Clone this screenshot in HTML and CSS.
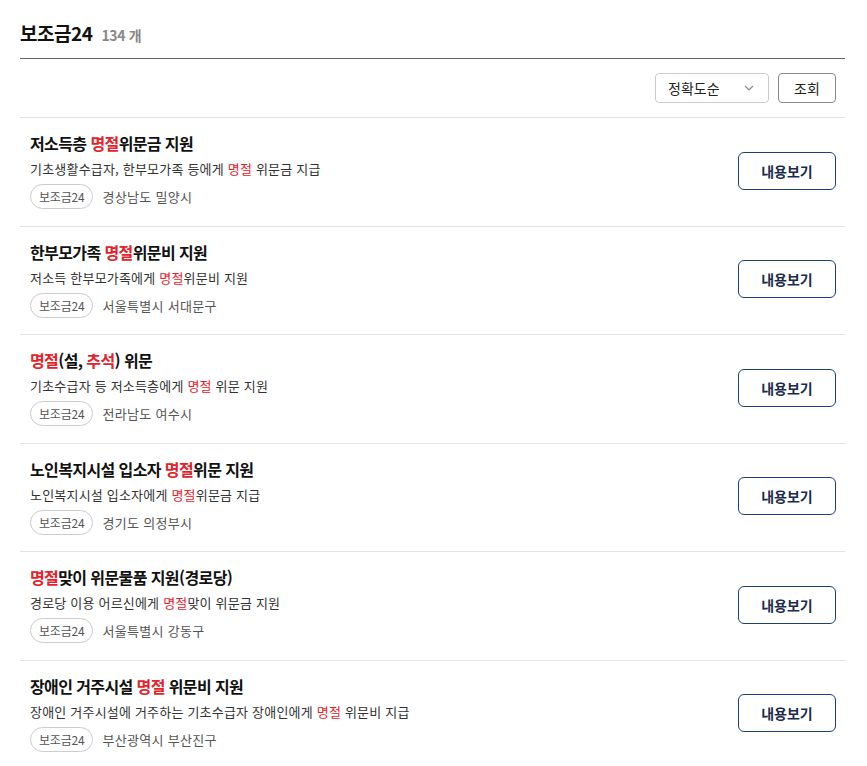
FILE: index.html
```html
<!DOCTYPE html>
<html lang="ko">
<head>
<meta charset="utf-8">
<link rel="stylesheet" href="styles.css">
</head>
<body>
<div class="wrap">
  <div class="head">
    <h2 class="head-title">보조금24</h2>
    <span class="head-count">134 개</span>
  </div>
  <div class="toolbar">
    <div class="select">
      <span>정확도순</span>
      <svg class="chev" width="10" height="6" viewBox="0 0 10 6"><path d="M1 1l4 4 4-4" fill="none" stroke="#888" stroke-width="1.2"/></svg>
    </div>
    <button class="btn-search">조회</button>
  </div>
  <ul class="list">
    <li class="item">
      <div class="info">
        <div class="title">저소득층 <em>명절</em>위문금 지원</div>
        <div class="desc">기초생활수급자, 한부모가족 등에게 <em>명절</em> 위문금 지급</div>
        <div class="meta"><span class="tag">보조금24</span><span class="region">경상남도 밀양시</span></div>
      </div>
      <button class="btn-view">내용보기</button>
    </li>
    <li class="item">
      <div class="info">
        <div class="title">한부모가족 <em>명절</em>위문비 지원</div>
        <div class="desc">저소득 한부모가족에게 <em>명절</em>위문비 지원</div>
        <div class="meta"><span class="tag">보조금24</span><span class="region">서울특별시 서대문구</span></div>
      </div>
      <button class="btn-view">내용보기</button>
    </li>
    <li class="item">
      <div class="info">
        <div class="title"><em>명절</em>(설, <em>추석</em>) 위문</div>
        <div class="desc">기초수급자 등 저소득층에게 <em>명절</em> 위문 지원</div>
        <div class="meta"><span class="tag">보조금24</span><span class="region">전라남도 여수시</span></div>
      </div>
      <button class="btn-view">내용보기</button>
    </li>
    <li class="item">
      <div class="info">
        <div class="title">노인복지시설 입소자 <em>명절</em>위문 지원</div>
        <div class="desc">노인복지시설 입소자에게 <em>명절</em>위문금 지급</div>
        <div class="meta"><span class="tag">보조금24</span><span class="region">경기도 의정부시</span></div>
      </div>
      <button class="btn-view">내용보기</button>
    </li>
    <li class="item">
      <div class="info">
        <div class="title"><em>명절</em>맞이 위문물품 지원(경로당)</div>
        <div class="desc">경로당 이용 어르신에게 <em>명절</em>맞이 위문금 지원</div>
        <div class="meta"><span class="tag">보조금24</span><span class="region">서울특별시 강동구</span></div>
      </div>
      <button class="btn-view">내용보기</button>
    </li>
    <li class="item">
      <div class="info">
        <div class="title">장애인 거주시설 <em>명절</em> 위문비 지원</div>
        <div class="desc">장애인 거주시설에 거주하는 기초수급자 장애인에게 <em>명절</em> 위문비 지급</div>
        <div class="meta"><span class="tag">보조금24</span><span class="region">부산광역시 부산진구</span></div>
      </div>
      <button class="btn-view">내용보기</button>
    </li>
  </ul>
</div>
</body>
</html>
```

FILE: styles.css
```css
* { box-sizing: border-box; }
html, body { margin: 0; padding: 0; background: #fff; }
body {
  font-family: "Noto Sans CJK KR", "Noto Sans", sans-serif;
  color: #222;
}
.wrap {
  width: 825px;
  margin-left: 20px;
}
.head {
  display: flex;
  align-items: baseline;
  gap: 9px;
  padding: 20px 0 12px;
  border-bottom: 1px solid #666;
  height: 59px;
}
.head-title {
  margin: 0;
  font-size: 19px;
  line-height: 26px;
  font-weight: 700;
  color: #111;
  letter-spacing: -0.5px;
}
.head-count {
  font-size: 14px;
  font-weight: 700;
  color: #888;
  letter-spacing: -0.3px;
}
.toolbar {
  display: flex;
  justify-content: flex-end;
  gap: 9px;
  padding: 14px 9px 14px 0;
  border-bottom: 1px solid #e3e3e3;
}
.select {
  width: 114px;
  height: 30px;
  border: 1px solid #ccc;
  border-radius: 4px;
  display: flex;
  align-items: center;
  justify-content: space-between;
  padding: 0 14px 0 12px;
  font-size: 14px;
  color: #222;
}
.chev { display: block; }
.btn-search {
  width: 58px;
  height: 30px;
  border: 1px solid #888;
  border-radius: 4px;
  background: #fff;
  font-family: inherit;
  font-size: 14px;
  color: #222;
  padding: 0;
}
.list { list-style: none; margin: 0; padding: 0; }
.item {
  display: flex;
  align-items: center;
  justify-content: space-between;
  padding: 14px 9px 16.6px 10px;
  border-bottom: 1px solid #e3e3e3;
}
.info { display: flex; flex-direction: column; }
.title {
  font-size: 16px;
  line-height: 22px;
  font-weight: 700;
  color: #111;
  letter-spacing: -0.6px;
}
em { font-style: normal; color: #e5222b; }
.desc {
  margin-top: 5px;
  font-size: 13px;
  line-height: 20px;
  color: #333;
  letter-spacing: 0.2px;
}
.meta {
  margin-top: 5px;
  display: flex;
  align-items: center;
  gap: 9px;
}
.tag {
  height: 25px;
  padding: 0 8px;
  border: 1px solid #ccc;
  border-radius: 13px;
  font-size: 12px;
  line-height: 23px;
  color: #555;
  letter-spacing: -0.2px;
}
.region {
  font-size: 13px;
  color: #555;
  letter-spacing: 0.3px;
}
.btn-view {
  width: 98px;
  height: 38px;
  border: 1.5px solid #1e3f7a;
  border-radius: 6px;
  background: #fff;
  font-family: inherit;
  font-size: 14px;
  font-weight: 700;
  color: #1b2b4d;
  padding: 0;
}
```
